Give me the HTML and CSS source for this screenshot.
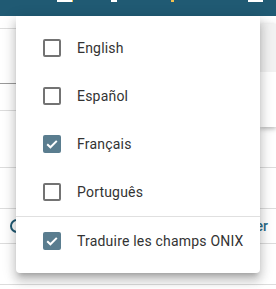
FILE: index.html
```html
<!DOCTYPE html>
<html>
<head>
<meta charset="utf-8">
<link rel="stylesheet" href="styles.css">
</head>
<body>
<div class="header">
  <span class="bit bit-white b1"></span><span class="bit bit-yellow b2"></span>
  <span class="bit bit-white b3"></span>
  <span class="bit bit-yellow b4"></span>
  <span class="bit bit-white b5"></span>
</div>
<div class="page">
  <div class="row r1"></div>
  <div class="row r2 dark"></div>
  <div class="row r3"></div>
  <div class="row r4"></div>
  <div class="row r5"></div>
  <div class="row r6"><span class="qicon"></span><span class="link">Filtrer</span></div>
  <div class="row r7"></div>
</div>
<div class="side-card">
  <div class="side-top"></div>
</div>
<div class="menu">
  <div class="item"><span class="cb"></span><span class="label">English</span></div>
  <div class="item"><span class="cb"></span><span class="label">Español</span></div>
  <div class="item"><span class="cb checked"><svg viewBox="0 0 18 18" width="18" height="18"><path d="M4.2 9.2 L7.4 12.3 L13.8 5.9" fill="none" stroke="#fff" stroke-width="2"/></svg></span><span class="label">Français</span></div>
  <div class="item"><span class="cb"></span><span class="label">Português</span></div>
  <div class="divider"></div>
  <div class="item"><span class="cb checked"><svg viewBox="0 0 18 18" width="18" height="18"><path d="M4.2 9.2 L7.4 12.3 L13.8 5.9" fill="none" stroke="#fff" stroke-width="2"/></svg></span><span class="label">Traduire les champs ONIX</span></div>
</div>
</body>
</html>
```
FILE: styles.css
```css
html, body {
  margin: 0;
  padding: 0;
  background: #fff;
  font-family: Roboto, "Noto Sans", sans-serif;
  overflow: hidden;
}
body {
  position: relative;
  width: 276px;
  height: 289px;
}
.header {
  height: 16px;
  background: #205a73;
  display: flex;
  align-items: flex-start;
}
.bit { display: block; height: 2px; }
.bit-white { background: #fff; }
.bit-yellow { background: #f2c14e; }
.b1 { margin-left: 57px; width: 15px; }
.b2 { width: 1px; }
.b3 { margin-left: 38px; width: 6px; }
.b4 { margin-left: 54px; width: 3px; }
.b5 { margin-left: 74px; width: 15px; }
.page { display: flex; flex-direction: column; }
.row { border-bottom: 1px solid #dcdcdc; box-sizing: border-box; position: relative; }
.row.dark { border-bottom-color: #9a9a9a; }
.r1 { height: 13px; }
.r2 { height: 55px; }
.r3 { height: 27px; }
.r4 { height: 57px; }
.r5 { height: 41px; }
.r6 { height: 35px; display: flex; align-items: center; justify-content: space-between; padding: 0 8px 0 10px; }
.r7 { height: 41px; }
.qicon {
  width: 10px; height: 10px;
  border: 2px solid #205a73;
  border-radius: 50%;
}
.link { color: #2b6c88; font-size: 14px; font-weight: 500; }
.side-card {
  position: absolute;
  left: 260px;
  top: 24px;
  width: 16px;
  height: 103px;
  background: #fff;
  box-shadow: 0 2px 4px rgba(0,0,0,.2), 0 1px 8px rgba(0,0,0,.12);
}
.side-top { height: 48px; background: #f2f2f2; }
.menu {
  position: absolute;
  left: 16px;
  top: 16px;
  width: 244px;
  background: #fff;
  border-radius: 0 0 4px 4px;
  padding: 8px 0;
  box-shadow: 0 5px 5px -3px rgba(0,0,0,.2), 0 8px 10px 1px rgba(0,0,0,.14), 0 3px 14px 2px rgba(0,0,0,.12);
}
.item {
  height: 48px;
  display: flex;
  align-items: center;
  padding-left: 27px;
}
.cb {
  width: 18px;
  height: 18px;
  box-sizing: border-box;
  border: 2px solid #737373;
  border-radius: 2px;
  flex: none;
  display: flex;
}
.cb.checked {
  border: none;
  background: #5a7d8f;
}
.label {
  margin-left: 16px;
  font-size: 14px;
  color: #333;
  letter-spacing: 0.2px;
}
.divider { height: 1px; background: #e0e0e0; }
```
